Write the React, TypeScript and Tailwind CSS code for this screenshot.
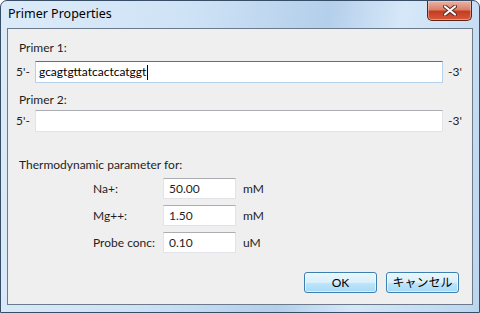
const ui = { fontFamily: '"Noto Sans", "Noto Sans CJK JP", sans-serif' };
const body = { fontFamily: 'Lato, "Noto Sans CJK JP", sans-serif' };

function CloseButton() {
  return (
    <div className="absolute right-[7px] top-0 h-[20px] w-[45px] rounded-b-[5px] border border-t-0 border-[#5e2217] bg-[linear-gradient(#ebb3a4_0%,#d9826b_45%,#c43c22_55%,#d8593b_100%)] flex items-center justify-center shadow-[inset_0_0_0_1px_rgba(255,220,210,0.45)]">
      <svg width="14" height="11" viewBox="0 0 14 11">
        <path d="M2 1.5 L12 9.5 M12 1.5 L2 9.5" stroke="#5a2a22" strokeWidth="4" strokeLinecap="round" />
        <path d="M2 1.5 L12 9.5 M12 1.5 L2 9.5" stroke="#ffffff" strokeWidth="2.2" strokeLinecap="round" />
      </svg>
    </div>
  );
}

function SeqInput({ value, focused }: { value?: string; focused?: boolean }) {
  return (
    <div
      className={`h-[22px] w-[408px] flex items-center bg-white pl-[3px] text-[12px] text-black border ${
        focused
          ? 'border-[#b6d2ea] border-t-[#3e78ab]'
          : 'border-[#e1e3e8] border-t-[#abadb3]'
      }`}
    >
      {value}
      {focused && <span className="ml-[1px] inline-block h-[15px] w-px bg-black" />}
    </div>
  );
}

function ParamRow({ label, value, unit }: { label: string; value: string; unit: string }) {
  return (
    <div className="flex items-center h-[21px]">
      <span className="w-[70px] text-[12px]">{label}</span>
      <div className="h-[21px] w-[73px] flex items-center bg-white pl-[5px] text-[12px] border border-[#e1e3e8] border-t-[#abadb3]">
        {value}
      </div>
      <span className="ml-[7px] text-[12px]">{unit}</span>
    </div>
  );
}

function Button({ children }: { children: React.ReactNode }) {
  return (
    <div className="h-[21px] w-[73px] rounded-[3px] border border-[#3c7fb1] bg-[linear-gradient(#eaf6fd_0%,#d9f0fc_50%,#bee6fd_51%,#a7d9f5_100%)] shadow-[inset_0_0_0_1px_rgba(255,255,255,0.6)] flex items-center justify-center text-[12px] text-black">
      {children}
    </div>
  );
}

export default function App() {
  return (
    <div
      className="relative w-[480px] h-[313px] rounded-t-[7px] border border-[#384d66] bg-[linear-gradient(100deg,#dcebf9_0%,#cfe3f6_35%,#b4cfeb_62%,#d6e8f8_76%,#bcd5ef_100%)] flex flex-col text-[#1e1e1e]"
      style={ui}
    >
      <div className="h-[27px] flex items-center pl-[7px] text-[12.5px] text-black">Primer Properties</div>
      <CloseButton />
      <div className="mx-[6px] mb-[7px] flex-1 border border-[#6c7b8c] bg-[#efefef] flex flex-col" style={body}>
        <div className="pl-[11px] pt-[11px] text-[12px] leading-[16px]">Primer 1:</div>
        <div className="mt-[5px] flex items-center">
          <span className="w-[27px] pl-[8px] text-[12px]">5'-</span>
          <SeqInput value="gcagtgttatcactcatggt" focused />
          <span className="ml-[5px] text-[12px]">-3'</span>
        </div>
        <div className="pl-[11px] mt-[9px] text-[12px] leading-[16px]">Primer 2:</div>
        <div className="mt-[2px] flex items-center">
          <span className="w-[27px] pl-[8px] text-[12px]">5'-</span>
          <SeqInput />
          <span className="ml-[5px] text-[12px]">-3'</span>
        </div>
        <div className="pl-[11px] mt-[25px] text-[12px] leading-[16px]">Thermodynamic parameter for:</div>
        <div className="pl-[85px] mt-[5px] flex flex-col gap-[6px]">
          <ParamRow label="Na+:" value="50.00" unit="mM" />
          <ParamRow label="Mg++:" value="1.50" unit="mM" />
          <ParamRow label="Probe conc:" value="0.10" unit="uM" />
        </div>
        <div className="mt-[19px] flex justify-end gap-[9px] pr-[13px]">
          <Button>OK</Button>
          <Button>キャンセル</Button>
        </div>
      </div>
    </div>
  );
}
